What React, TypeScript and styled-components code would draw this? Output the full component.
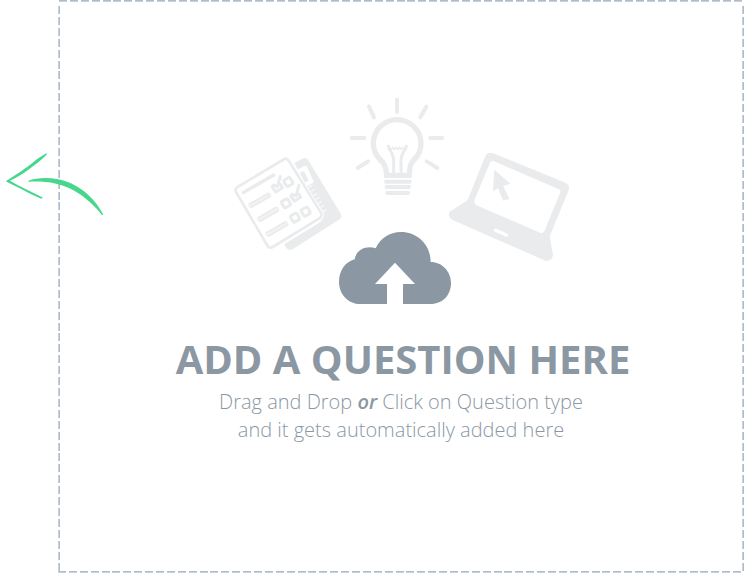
import React from "react";
import styled, { createGlobalStyle } from "styled-components";

const GlobalStyle = createGlobalStyle`
  * { box-sizing: border-box; }
  body {
    margin: 0;
    background: #fff;
    font-family: "Open Sans", "Noto Sans", sans-serif;
  }
`;

const slate = "#8b98a4";
const pale = "#e9ebed";
const paler = "#f1f2f4";
const green = "#46d78c";

const Page = styled.main`
  display: flex;
  min-height: 100vh;
  padding-left: 58px;
`;

const dashes = (direction: string, period: string, start: string) =>
  `repeating-linear-gradient(${direction}, #b0bccb 0 8px, transparent 8px ${period}) ${start}`;

const soften = (start: string) =>
  `linear-gradient(rgba(255, 255, 255, 0.3), rgba(255, 255, 255, 0.3)) ${start} no-repeat`;

const row = "calc(100% * 2 / 126)";
const column = "calc(100% * 2 / 105)";

const DropZone = styled.section`
  position: relative;
  flex: 1;
  display: flex;
  flex-direction: column;
  align-items: center;
  padding: 94px 16px 16px;
  background:
    ${soften("0 1px / 100% 1px")},
    ${soften("0 100% / 100% 1px")},
    ${soften("0 0 / 1px 100%")},
    ${soften("calc(100% - 1px) 0 / 1px 100%")},
    ${dashes("to right", row, "1px 0 / 100% 2px no-repeat")},
    ${dashes("to right", row, "0 100% / 100% 2px no-repeat")},
    ${dashes("to bottom", column, "0 6px / 2px 100% no-repeat")},
    ${dashes("to bottom", column, "100% 6px / 2px 100% no-repeat")};
`;

const Hint = styled.svg`
  position: absolute;
  left: -58px;
  top: 140px;
  width: 120px;
  height: 90px;
`;

const Illustration = styled.svg`
  width: 344px;
  height: 214px;
  flex: none;
`;

const Title = styled.h1`
  margin: 24px 0 2px;
  padding-left: 4px;
  color: ${slate};
  font-size: 40px;
  font-weight: 700;
  line-height: 54px;
  text-align: center;
`;

const Description = styled.p`
  margin: 0;
  color: ${slate};
  font-size: 20px;
  font-weight: 300;
  line-height: 28px;
  text-align: center;
`;

const Or = styled.em`
  font-weight: 600;
`;

function ArrowHint() {
  return (
    <Hint viewBox="0 0 360 270" fill={green} aria-hidden="true">
      <path d="M19 122C50 103 78 84 98 68C112 56 127 47 139 40Q142 42 139 45C122 62 105 75 84 90C65 104 48 114 30 122C62 142 94 154 127 172Q129 175 125 176C89 163 59 143 21 126Q18 124 19 122Z" />
      <path d="M85 122C107 114 140 112 170 117C202 122 226 135 251 153C276 172 297 199 309 223Q309 227 305 224C289 203 265 181 240 163C218 147 193 137 168 131C142 125 113 124 87 125Q83 124 85 122Z" />
    </Hint>
  );
}

function Checklist() {
  return (
    <g transform="translate(225 145) scale(.33333)" fill="none" stroke={pale} strokeLinecap="round" strokeLinejoin="round">
      <path fill={pale} stroke="none" d="M208 54L235 40Q244 37 250 46L348 208Q352 217 344 223L204 312Q191 320 182 307L178 297L283 233Q299 221 289 204Z" />
      <path stroke="#fff" strokeWidth="13" strokeLinecap="butt" d="M214 82L240 69L259 109L243 118" />
      <path stroke="#fff" strokeWidth="3" d="M252 127l9-5M259 139l9-5M266 151l9-5M273 163l9-5M280 175l9-5M287 187l9-5M294 199l9-5" />
      <path stroke="#fff" strokeWidth="14" d="M191 50L289 205Q292 214 283 222L190 280" />
      <path fill="#fff" strokeWidth="8" d="M36 127L178 42Q185 38 191 47L289 205Q292 214 283 220L143 306Q133 312 126 300L33 141Q29 132 36 127Z" />
      <path strokeWidth="10" d="M55 143L146 90" />
      <path stroke={paler} strokeWidth="12" d="M76 182L133 150M102 224L157 192M127 268L184 235" />
      <path strokeWidth="5" d="M73 177L130 145M79 187L136 154M99 219L153 187M106 229L160 197M124 263L181 230M131 273L188 240" />
      <g strokeWidth="9">
        <rect x="-11" y="-11" width="22" height="22" rx="5" transform="translate(190 111) rotate(-30)" />
        <rect x="-11" y="-11" width="22" height="22" rx="5" transform="translate(183 175) rotate(-30)" />
        <rect x="-11" y="-11" width="22" height="22" rx="5" transform="translate(210 218) rotate(-30)" />
        <rect x="-11" y="-11" width="22" height="22" rx="5" transform="translate(242 200) rotate(-30)" />
        <path d="M141 124L152 141L172 129L167 119M146 120L157 125L166 94" />
        <path d="M197 152L208 169L227 157L222 147M202 148L213 153L222 121" />
      </g>
    </g>
  );
}

function Bulb() {
  return (
    <g transform="translate(340 90) scale(.33333)" fill="none" stroke={pale} strokeLinecap="round">
      <path strokeWidth="12" d="M171 29V66M87 50L102 82M259 50L241 82M35 144H73M271 144H307M53 234L84 214M260 214L292 234" />
      <path strokeWidth="16" strokeLinecap="butt" strokeLinejoin="miter" d="M140 256C139 229 132 220 119 207C106 194 100 179 100 160C100 121 132 89 171 89C210 89 243 121 243 160C243 179 237 194 224 207C211 220 209 229 208 256Z" />
      <path strokeWidth="9" strokeLinecap="butt" d="M144 165L148 178Q161 194 161 214V253M200 165L196 178Q183 194 183 214V253" />
      <path strokeWidth="4" d="M149 174l5 5l5-7l5 7l5-7l5 7l5-7l5 7l5-7l5 6" />
      <path strokeWidth="12" d="M138 275H209M140 291H207M142 309H204" />
    </g>
  );
}

function Laptop() {
  return (
    <g transform="translate(440 140) scale(.33333)" fill={pale}>
      <path
        fillRule="evenodd"
        d="M136 48Q143 35 158 39L373 127Q391 135 386 151L329 289L339 344Q337 364 316 362L38 240Q21 229 29 215L83 180ZM151 66L103 181Q101 190 108 195L300 278Q309 281 313 274L361 157Q363 151 356 148L163 64Q154 61 151 66Z"
      />
      <path d="M163 89L211 131L190 138L208 177L190 182L174 145L159 154Z" />
      <path d="M167 271L199 285" fill="none" stroke="#fff" strokeWidth="10" strokeLinecap="round" />
    </g>
  );
}

function UploadCloud() {
  return (
    <g transform="translate(330 225) scale(.33333)">
      <path
        fill={slate}
        d="M91 237C54 237 27 207 27 170C27 136 47 110 74 103C78 76 107 60 137 70C151 40 178 21 213 21C263 21 302 60 302 111C337 111 363 140 363 174C363 209 339 237 302 237H219V177H255L195 113L135 177H171V237Z"
      />
    </g>
  );
}

export default function App() {
  return (
    <>
      <GlobalStyle />
      <Page>
        <DropZone aria-label="Add a question">
          <ArrowHint />
          <Illustration viewBox="229 94 344 214" aria-hidden="true">
            <Checklist />
            <Bulb />
            <Laptop />
            <UploadCloud />
          </Illustration>
          <Title>ADD A QUESTION HERE</Title>
          <Description>
            Drag and Drop <Or>or</Or> Click on Question type
            <br />
            and it gets automatically added here
          </Description>
        </DropZone>
      </Page>
    </>
  );
}
